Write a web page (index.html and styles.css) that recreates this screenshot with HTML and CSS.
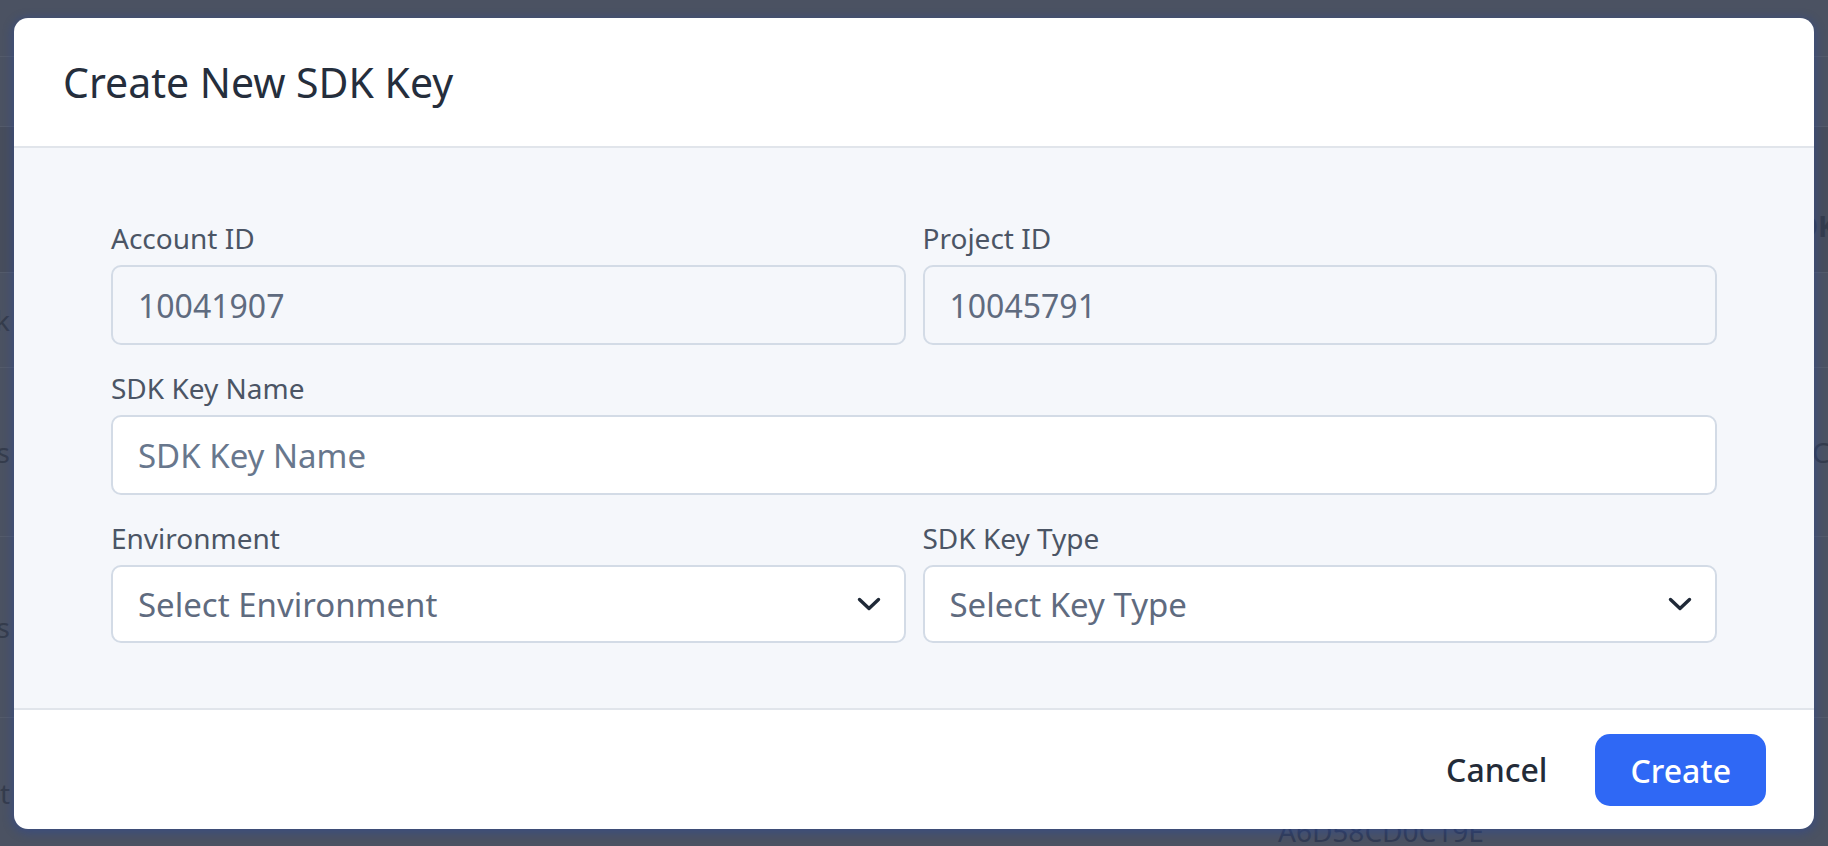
FILE: index.html
```html
<!DOCTYPE html>
<html lang="en">
<head>
<meta charset="utf-8">
<title>Create New SDK Key</title>
<link rel="stylesheet" href="styles.css">
</head>
<body>
<div class="page">
  <div class="bg">
    <div class="bgrow r0"></div>
    <div class="bgrow r1"></div>
    <div class="bgrow r2"><span class="frag-l"></span><span class="frag-r bold">SDK</span></div>
    <div class="bgrow r3"><span class="frag-l">Task</span><span class="frag-r"></span></div>
    <div class="bgrow r4"><span class="frag-l">Access</span><span class="frag-r first">Cre</span></div>
    <div class="bgrow r5"><span class="frag-l">Access</span><span class="frag-r"></span></div>
    <div class="bgrow r6"><span class="frag-l low">Stat</span><span class="bg-id">A6D58CD0C19E</span></div>
  </div>

  <div class="overlay">
    <div class="modal">
      <div class="modal-header">
        <h2 class="title">Create New SDK Key</h2>
      </div>
      <div class="modal-body">
        <div class="form-grid">
          <div class="field">
            <label class="label">Account ID</label>
            <div class="input readonly">10041907</div>
          </div>
          <div class="field">
            <label class="label">Project ID</label>
            <div class="input readonly">10045791</div>
          </div>
          <div class="field full">
            <label class="label" for="keyname">SDK Key Name</label>
            <input id="keyname" class="input text-input" type="text" placeholder="SDK Key Name">
          </div>
          <div class="field">
            <label class="label">Environment</label>
            <div class="select">
              <span>Select Environment</span>
              <svg class="chevron" viewBox="0 0 24 14" width="24" height="14" aria-hidden="true"><path d="M2.5 2.5 L12 11.5 L21.5 2.5" fill="none" stroke="#1f2937" stroke-width="3.4" stroke-linecap="round" stroke-linejoin="round"/></svg>
            </div>
          </div>
          <div class="field">
            <label class="label">SDK Key Type</label>
            <div class="select">
              <span>Select Key Type</span>
              <svg class="chevron" viewBox="0 0 24 14" width="24" height="14" aria-hidden="true"><path d="M2.5 2.5 L12 11.5 L21.5 2.5" fill="none" stroke="#1f2937" stroke-width="3.4" stroke-linecap="round" stroke-linejoin="round"/></svg>
            </div>
          </div>
        </div>
      </div>
      <div class="modal-footer">
        <button class="btn-cancel" type="button">Cancel</button>
        <button class="btn-create" type="button">Create</button>
      </div>
    </div>
  </div>
</div>
</body>
</html>
```

FILE: styles.css
```css
* { box-sizing: border-box; }

html, body {
  margin: 0;
  padding: 0;
}

body {
  font-family: "Noto Sans", "Open Sans", sans-serif;
  background: #4b5262;
  overflow: hidden;
}

.page {
  position: relative;
  width: 1828px;
  height: 846px;
  overflow: hidden;
  background: #4b5262;
}

/* underlying page (seen through the backdrop) */
.bg {
  display: flex;
  flex-direction: column;
  height: 846px;
  font-size: 28px;
  color: #353c4b;
}

.bgrow {
  display: flex;
  justify-content: space-between;
  align-items: center;
  border-bottom: 1px solid #545b6a;
  flex: none;
}

.r0 { height: 57px; }
.r1 { height: 70px; }
.r2 { height: 146px; background: #474d5c; }
.r3 { height: 95px; }
.r4 { height: 169px; }
.r5 { height: 181px; }
.r6 { flex: 1; border-bottom: none; align-items: flex-start; justify-content: flex-start; }

.frag-l {
  width: 10px;
  display: flex;
  justify-content: flex-end;
  overflow: hidden;
  white-space: nowrap;
  line-height: 36px;
}

.frag-l.low { margin-top: 57px; }

.frag-r {
  width: 16px;
  overflow: hidden;
  white-space: nowrap;
  line-height: 36px;
  text-indent: -30px;
}

.frag-r.first { text-indent: 0; }

.frag-r.bold { font-weight: 700; align-self: flex-end; margin-bottom: 28px; }

.bg-id {
  margin-left: 1268px;
  margin-top: 95px;
  line-height: 36px;
  color: #323b52;
}

/* backdrop + modal */
.overlay {
  position: absolute;
  inset: 0;
  padding: 18px 14px 17px;
  display: flex;
  align-items: flex-start;
}

.modal {
  width: 100%;
  background: #ffffff;
  border-radius: 14px;
  overflow: hidden;
  display: flex;
  flex-direction: column;
  box-shadow: 0 2px 10px 2px rgba(40, 70, 160, 0.45);
}

.modal-header {
  padding: 36px 49px 36px;
  border-bottom: 2px solid #e1e5eb;
}

.title {
  margin: 0;
  font-size: 41px;
  font-weight: 400;
  line-height: 56px;
  color: #252e3c;
}

.modal-body {
  background: #f5f7fb;
  padding: 72px 97px 65px;
}

.form-grid {
  display: grid;
  grid-template-columns: 1fr 1fr;
  column-gap: 17px;
  row-gap: 25px;
}

.field {
  display: flex;
  flex-direction: column;
  gap: 9px;
}

.field.full { grid-column: 1 / -1; }

.label {
  font-size: 28px;
  line-height: 36px;
  color: #4b5565;
}

.input {
  height: 80px;
  border: 2px solid #d3dbe6;
  border-radius: 10px;
  padding: 0 25px;
  font-family: inherit;
  font-size: 32px;
  color: #5f6b7f;
  display: flex;
  align-items: center;
  background: #ffffff;
  width: 100%;
  outline: none;
}

.input.readonly { background: #f5f7fb; }

.text-input { font-size: 33px; }

.text-input::placeholder { color: #68778d; opacity: 1; }

.select {
  height: 78px;
  border: 2px solid #d3dbe6;
  border-radius: 10px;
  background: #ffffff;
  padding: 0 23px 0 25px;
  display: flex;
  align-items: center;
  justify-content: space-between;
  font-size: 33px;
  color: #5f6b7f;
}

.chevron { flex: none; display: block; }

.modal-footer {
  border-top: 2px solid #e1e5eb;
  padding: 24px 48px 23px;
  display: flex;
  justify-content: flex-end;
  align-items: center;
  gap: 48px;
}

.btn-cancel,
.btn-create {
  font-family: inherit;
  font-size: 32px;
  font-weight: 500;
  border: none;
  cursor: pointer;
}

.btn-cancel {
  background: transparent;
  color: #232b38;
  padding: 0;
  line-height: 72px;
}

.btn-create {
  background: #2f68f5;
  color: #ffffff;
  height: 72px;
  padding: 0 35px;
  border-radius: 15px;
}
```
